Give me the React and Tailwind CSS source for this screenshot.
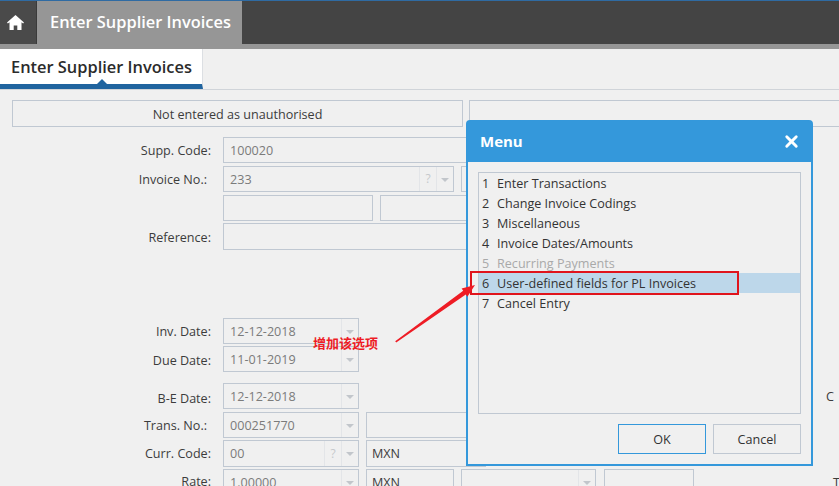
import { X } from "lucide-react";

const font = { fontFamily: '"Open Sans", sans-serif' };

const menuItems = [
  { n: 1, label: "Enter Transactions" },
  { n: 2, label: "Change Invoice Codings" },
  { n: 3, label: "Miscellaneous" },
  { n: 4, label: "Invoice Dates/Amounts" },
  { n: 5, label: "Recurring Payments", disabled: true },
  { n: 6, label: "User-defined fields for PL Invoices", active: true },
  { n: 7, label: "Cancel Entry" },
];

function Caret() {
  return (
    <span className="flex w-[17px] shrink-0 items-center justify-center self-stretch border-l border-[#e3e5e8]">
      <span className="mt-px h-0 w-0 border-x-[4px] border-t-[4px] border-x-transparent border-t-[#c2c6cb]" />
    </span>
  );
}

function Field({ value = "", width, caret, help, className = "h-[26px]" }) {
  return (
    <div
      className={`flex shrink-0 items-center border border-[#c0c8d2] text-[12.6px] text-[#7b7b7b] ${width} ${className}`}
    >
      <span className="min-w-0 flex-1 truncate pl-[6px] pt-[2px]">{value}</span>
      {help && (
        <span className="flex w-[17px] shrink-0 items-center justify-center self-stretch border-l border-[#e3e5e8] text-[12px] text-[#c5c8cc]">
          ?
        </span>
      )}
      {caret && <Caret />}
    </div>
  );
}

function Row({ label, labelPad = "pt-[2px]", mt = "mt-[3px]", children }) {
  return (
    <div className={`flex items-center ${mt}`}>
      <div className={`w-[211px] shrink-0 text-right text-[12.6px] text-[#3c3c3c] ${labelPad}`}>{label}</div>
      <div className="ml-3 flex shrink-0 gap-[7px]">{children}</div>
    </div>
  );
}

export default function App() {
  return (
    <div className="relative h-[486px] w-[839px] overflow-hidden bg-[#f0f0f0]" style={font}>
      {/* Top bar */}
      <div className="h-px bg-[#2f6ba3]" />
      <div className="flex h-[43px] bg-[#444444]">
        <div className="flex w-[37px] items-center border-r border-[#3a3a3a] bg-[#4a4a4a] pl-[7px]">
          <svg width="17" height="15" viewBox="0 0 17 15" fill="white">
            <path d="M8.5 0 0 7.6l.9 1L2.5 7.2V15h4.2v-4.6h3.6V15h4.2V7.2l1.6 1.4.9-1z" />
          </svg>
        </div>
        <div className="flex w-[205px] items-center bg-[#969696] pl-[13px] text-[16.4px] font-semibold text-white">
          Enter Supplier Invoices
        </div>
      </div>
      <div className="h-[5px] bg-[#969696]" />

      {/* Tab strip */}
      <div className="flex h-[41px] border-b border-[#d0d4d9]">
        <div className="relative flex w-[203px] items-center border-r border-b-[5px] border-r-[#dcdfe3] border-b-[#20649f] bg-white pl-[11px] pt-[2px] text-[16.4px] font-semibold text-[#2b2b2b]">
          Enter Supplier Invoices
          <span className="absolute bottom-0 left-[97px] h-0 w-0 border-x-[5px] border-b-[5px] border-x-transparent border-b-[#20649f]" />
        </div>
      </div>

      {/* Form */}
      <div className="pt-[10px]">
        <div className="flex gap-[6px] pl-3">
          <div className="flex h-[27px] w-[451px] shrink-0 items-center justify-center border border-[#c0c8d2] pt-[3px] text-[12.6px] text-[#3c3c3c]">
            Not entered as unauthorised
          </div>
          <div className="h-[27px] w-[400px] shrink-0 border border-[#c0c8d2]" />
        </div>

        <Row label="Supp. Code:" mt="mt-[10px]">
          <Field value="100020" width="w-[300px]" />
        </Row>
        <Row label="Invoice No.:" labelPad="pr-1 pt-[2px]">
          <Field value="233" width="w-[231px]" help caret />
          <Field width="w-[100px]" />
        </Row>
        <Row label="">
          <Field width="w-[150px]" />
          <Field width="w-[150px]" />
        </Row>
        <Row label="Reference:" labelPad="pt-1" mt="mt-[2px]">
          <Field width="w-[300px]" className="h-[27px]" />
        </Row>

        <Row label="Inv. Date:" mt="mt-[68px]">
          <Field value="12-12-2018" width="w-[136px]" caret />
        </Row>
        <Row label="Due Date:" labelPad="pt-1" mt="mt-[2px]">
          <Field value="11-01-2019" width="w-[136px]" caret />
        </Row>
        <Row label="B-E Date:" labelPad="pt-[6px]" mt="mt-[11px]">
          <Field value="12-12-2018" width="w-[136px]" caret />
        </Row>
        <Row label="Trans. No.:" labelPad="pr-1 pt-[2px]">
          <Field value="000251770" width="w-[136px]" caret />
          <Field width="w-[120px]" />
        </Row>
        <Row label="Curr. Code:" mt="mt-[2px]">
          <Field value="00" width="w-[136px]" help caret className="h-[27px]" />
          <div className="flex h-[27px] w-[120px] items-center border border-[#c0c8d2] pl-[5px] pt-[2px] text-[12.6px] text-[#3c3c3c]">MXN</div>
        </Row>
        <Row label="Rate:" labelPad="" mt="mt-[2px]">
          <Field value="1.00000" width="w-[136px]" caret />
          <div className="flex h-[26px] w-[88px] items-center border border-[#c0c8d2] pl-[5px] pt-[2px] text-[12.6px] text-[#3c3c3c]">MXN</div>
          <Field width="w-[135px]" caret />
          <Field width="w-[90px]" className="ml-px h-[26px]" />
        </Row>
      </div>

      {/* Stray labels at the right edge */}
      <span className="absolute left-[826px] top-[388px] text-[12.6px] text-[#3c3c3c]">C</span>
      <span className="absolute left-[833px] top-[474px] text-[12.6px] text-[#3c3c3c]">T</span>

      {/* Menu dialog */}
      <div className="absolute left-[466px] top-[120px] flex h-[346px] w-[347px] flex-col rounded-t-[4px] border-2 border-[#3498db] bg-[#f0f0f0]">
        <div className="-mx-px -mt-px flex h-[41px] shrink-0 items-center justify-between rounded-t-[4px] bg-[#3498db] pl-[13px] pr-[11px] text-[15px] font-bold text-white">
          Menu
          <X size={19} strokeWidth={3.6} color="white" />
        </div>
        <div className="mx-[10px] mt-[10px] h-[242px] border border-[#c0c8d2]">
          {menuItems.map((item) => (
            <div
              key={item.n}
              className={`flex h-5 items-center pl-[3px] pt-[2px] text-[12.6px] ${
                item.active ? "bg-[#bdd7ea]" : ""
              } ${item.disabled ? "text-[#a9a9a9]" : "text-[#333333]"}`}
            >
              <span className="w-[15px]">{item.n}</span>
              {item.label}
            </div>
          ))}
        </div>
        <div className="mt-[10px] flex justify-end gap-[7px] pr-[10px]">
          <button className="h-[30px] w-[88px] border border-[#3498db] pt-[2px] text-[12.6px] text-[#333333]">OK</button>
          <button className="h-[30px] w-[88px] border border-[#c0c8d2] pt-[2px] text-[12.6px] text-[#333333]">Cancel</button>
        </div>
      </div>

      {/* Annotation */}
      <div className="absolute left-[470px] top-[271px] h-[24px] w-[269px] border-2 border-[#e0141c]" />
      <span
        className="absolute left-[313px] top-[333px] text-[13px] font-bold text-[#ee1c25]"
        style={{ fontFamily: '"Noto Sans CJK SC", sans-serif' }}
      >
        增加该选项
      </span>
      <svg className="absolute left-[390px] top-[280px]" width="90" height="66" viewBox="0 0 90 66">
        <path d="M5.2 61.2 73.2 10.8 71.6 8.5 85 5 77.4 16.7 75.8 14.4 6.2 62.4z" fill="#ee1c25" />
      </svg>
    </div>
  );
}
